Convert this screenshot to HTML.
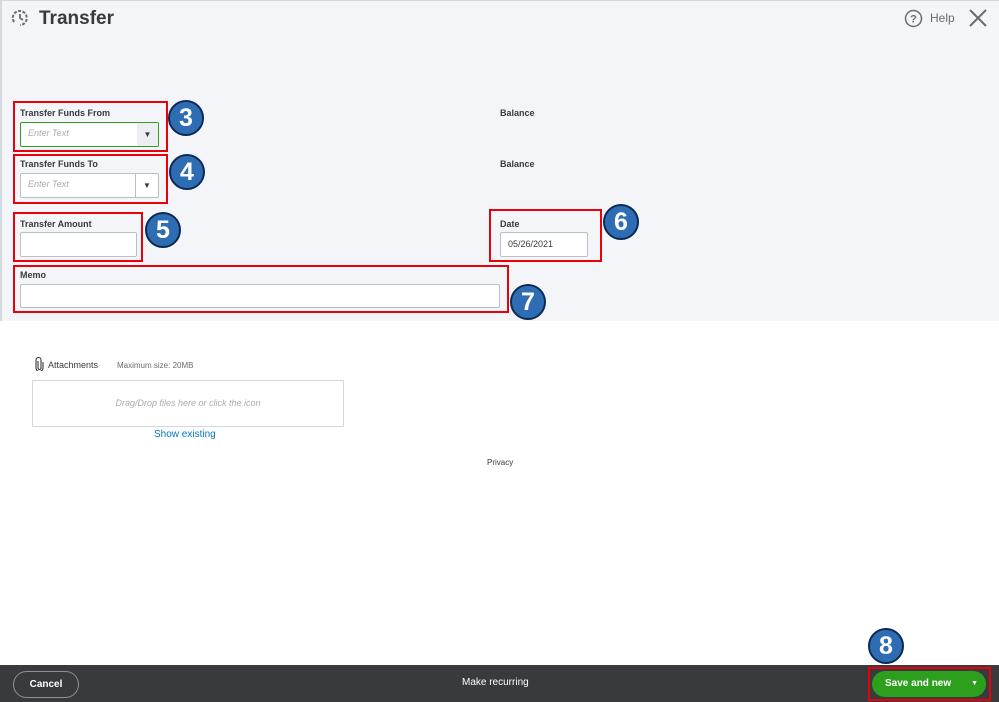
<!DOCTYPE html>
<html><head><style>
*{box-sizing:border-box;margin:0;padding:0}
body{width:999px;height:702px;position:relative;overflow:hidden;background:#fff;font-family:"Liberation Sans",sans-serif;color:#393a3d}
.a{position:absolute}
.top{left:0;top:0;width:999px;height:321px;background:#f4f5f8;border-left:2px solid #d4d7dc;border-top:1px solid #d4d7dc}
.lbl{font-size:9px;font-weight:bold;color:#393a3d}
.inp{background:#fff;border:1px solid #babec5;border-radius:2px;font-size:9px}
.red{border:2px solid #e8000b}
.c{width:36px;height:36px;border-radius:50%;background:#2e6db3;border:2px solid #0d2a55;color:#fff;font-weight:bold;font-size:25px;text-align:center;line-height:32px}
.ph{color:#aaa;font-style:italic;padding:5px 7px}
</style></head><body>
<div class="a top"></div>
<svg class="a" style="left:10px;top:8px" width="20" height="20" viewBox="0 0 20 20"><path d="M4 14 A7 7 0 1 1 10 17" fill="none" stroke="#6b6c72" stroke-width="2" stroke-dasharray="3 1.5"/><path d="M10 6v4l3 2" fill="none" stroke="#6b6c72" stroke-width="1.8"/></svg>
<div class="a" style="left:39px;top:8px;font-size:19px;font-weight:bold;color:#393a3d">Transfer</div>
<svg class="a" style="left:904px;top:9px" width="19" height="19"><circle cx="9.5" cy="9.5" r="8" fill="none" stroke="#6b6c72" stroke-width="1.5"/><text x="9.5" y="13.5" font-size="11" text-anchor="middle" fill="#6b6c72" font-family="Liberation Sans" font-weight="bold">?</text></svg>
<div class="a" style="left:930px;top:11px;font-size:12px;color:#6b6c72">Help</div>
<svg class="a" style="left:968px;top:8px" width="20" height="20"><path d="M2 2L18 18M18 2L2 18" stroke="#6b6c72" stroke-width="2"/></svg>

<div class="a red" style="left:13px;top:101px;width:155px;height:51px"></div>
<div class="a lbl" style="left:20px;top:108px">Transfer Funds From</div>
<div class="a inp" style="left:20px;top:122px;width:139px;height:25px;border-color:#2ca01c"><div class="ph">Enter Text</div><div class="a" style="right:0;top:0;width:21px;height:23px;background:#eceef1;font-size:8px;text-align:center;line-height:23px">▼</div></div>
<div class="a c" style="left:168px;top:100px">3</div>

<div class="a red" style="left:13px;top:154px;width:155px;height:50px"></div>
<div class="a lbl" style="left:20px;top:159px">Transfer Funds To</div>
<div class="a inp" style="left:20px;top:173px;width:139px;height:25px"><div class="ph">Enter Text</div><div class="a" style="right:0;top:0;width:23px;height:23px;border-left:1px solid #babec5;font-size:8px;text-align:center;line-height:23px">▼</div></div>
<div class="a c" style="left:169px;top:154px">4</div>

<div class="a red" style="left:13px;top:212px;width:130px;height:50px"></div>
<div class="a lbl" style="left:20px;top:219px">Transfer Amount</div>
<div class="a inp" style="left:20px;top:232px;width:117px;height:25px"></div>
<div class="a c" style="left:145px;top:212px">5</div>

<div class="a lbl" style="left:500px;top:108px">Balance</div>
<div class="a lbl" style="left:500px;top:159px">Balance</div>

<div class="a red" style="left:489px;top:209px;width:113px;height:53px"></div>
<div class="a lbl" style="left:500px;top:219px">Date</div>
<div class="a inp" style="left:500px;top:232px;width:88px;height:25px;padding:6px 7px;color:#393a3d">05/26/2021</div>
<div class="a c" style="left:603px;top:204px">6</div>

<div class="a red" style="left:13px;top:265px;width:496px;height:48px"></div>
<div class="a lbl" style="left:20px;top:270px">Memo</div>
<div class="a inp" style="left:20px;top:284px;width:480px;height:24px"></div>
<div class="a c" style="left:510px;top:284px">7</div>

<svg class="a" style="left:35px;top:357px" width="9" height="14"><path d="M3 4v7a1.5 1.5 0 0 0 3 0V3a2.5 2.5 0 0 0-5 0v8a3.5 3.5 0 0 0 7 0V5" fill="none" stroke="#393a3d" stroke-width="1.1"/></svg>
<div class="a" style="left:48px;top:360px;font-size:9px">Attachments</div>
<div class="a" style="left:117px;top:361px;font-size:8px;color:#6b6c72">Maximum size: 20MB</div>
<div class="a" style="left:32px;top:380px;width:312px;height:47px;border:1px solid #d4d7dc;font-size:9px;font-style:italic;color:#aaa;text-align:center;line-height:45px">Drag/Drop files here or click the icon</div>
<div class="a" style="left:154px;top:429px;font-size:10px;color:#0077c5">Show existing</div>
<div class="a" style="left:487px;top:458px;font-size:8px;color:#393a3d">Privacy</div>

<div class="a c" style="left:868px;top:628px">8</div>
<div class="a" style="left:0;top:665px;width:999px;height:37px;background:#393a3d"></div>
<div class="a" style="left:13px;top:671px;width:66px;height:27px;border:1px solid #8d9096;border-radius:14px;color:#fff;font-size:10px;font-weight:bold;text-align:center;line-height:25px">Cancel</div>
<div class="a" style="left:462px;top:677px;font-size:10px;color:#fff">Make recurring</div>
<div class="a red" style="left:868px;top:667px;width:123px;height:34px"></div>
<div class="a" style="left:872px;top:671px;width:114px;height:26px;border-radius:13px;background:#2ca01c;color:#fff;font-size:10px;font-weight:bold;line-height:26px;padding-left:13px">Save and new<span style="position:absolute;right:8px;font-size:7px">▼</span></div>
</body></html>
